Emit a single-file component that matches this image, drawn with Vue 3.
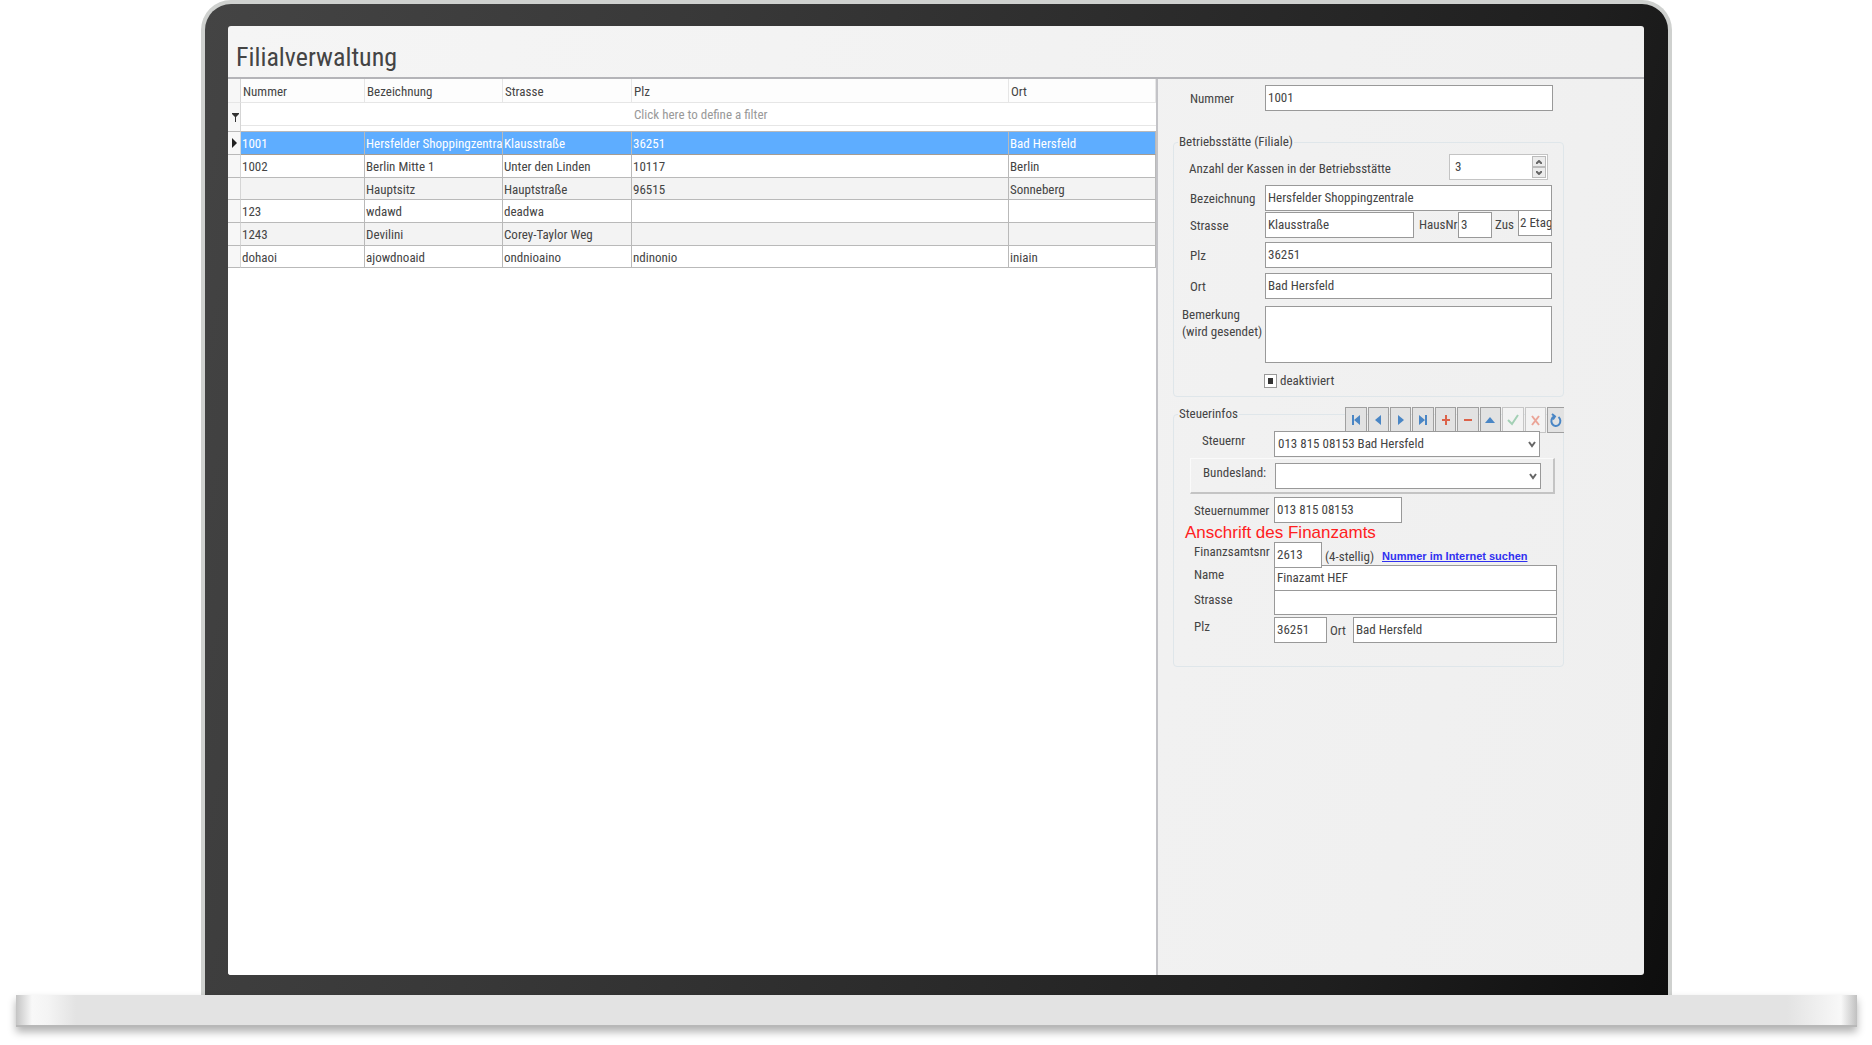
<script setup>
import { ref } from 'vue'

const rows = ref([
  ['1001', 'Hersfelder Shoppingzentra', 'Klausstraße', '36251', 'Bad Hersfeld'],
  ['1002', 'Berlin Mitte 1', 'Unter den Linden', '10117', 'Berlin'],
  ['', 'Hauptsitz', 'Hauptstraße', '96515', 'Sonneberg'],
  ['123', 'wdawd', 'deadwa', '', ''],
  ['1243', 'Devilini', 'Corey-Taylor Weg', '', ''],
  ['dohaoi', 'ajowdnoaid', 'ondnioaino', 'ndinonio', 'iniain'],
])
const selected = ref(0)

const tools = [
  { name: 'Erster', color: '#4a86c5', fill: 'M6 5h2v10H6zM14 5v10L8 10z' },
  { name: 'Zurück', color: '#4a86c5', fill: 'M13 5v10L7 10z' },
  { name: 'Weiter', color: '#4a86c5', fill: 'M7 5v10l6-5z' },
  { name: 'Letzter', color: '#4a86c5', fill: 'M6 5v10l6-5zM12 5h2v10h-2z' },
  { name: 'Hinzufügen', color: '#dc6249', fill: 'M9 5h2v4h3v2h-3v4H9v-4H6V9h3z' },
  { name: 'Löschen', color: '#dc6249', fill: 'M6 9h8v2H6z' },
  { name: 'Bearbeiten', color: '#4a86c5', fill: 'M5 13h10l-5-6z' },
  { name: 'Speichern', color: '#a3d0b5', stroke: 'M5 10l4 4 6-9', off: true },
  { name: 'Abbrechen', color: '#eba598', stroke: 'M7 6l7 9M14 6l-7 9', off: true },
  { name: 'Aktualisieren', color: '#4a86c5', stroke: 'M12.500 7A4.500 5 0 1 1 8 6.500M6 4l3 2.500-2 3' },
]
</script>

<template>
  <div class="laptop">
    <div class="lid">
      <main class="screen">
        <header class="title-bar"><h1>Filialverwaltung</h1></header>
        <div class="body">
          <section class="list">
            <table>
              <colgroup>
                <col class="c-mark" /><col class="c-num" /><col class="c-name" /><col class="c-street" /><col /><col class="c-city" />
              </colgroup>
              <thead>
                <tr class="heads">
                  <th class="mark"></th>
                  <th>Nummer</th><th>Bezeichnung</th><th>Strasse</th><th>Plz</th><th>Ort</th>
                </tr>
                <tr class="filter">
                  <td class="mark">
                    <svg width="7" height="9" viewBox="0 0 7 9"><path d="M0 0h7v1L4 4v5H3V4L0 1z" fill="#333" /></svg>
                  </td>
                  <td colspan="3"></td>
                  <td colspan="2">Click here to define a filter</td>
                </tr>
                <tr class="spacer"><td class="mark"></td><td colspan="5"></td></tr>
              </thead>
              <tbody>
                <tr v-for="(row, i) in rows" :key="i" :class="{ selected: i === selected }" @click="selected = i">
                  <td class="mark">
                    <svg v-if="i === selected" width="5" height="10" viewBox="0 0 5 10"><path d="M0 0l5 5-5 5z" fill="#222" /></svg>
                  </td>
                  <td v-for="(cell, j) in row" :key="j">{{ cell }}</td>
                </tr>
              </tbody>
            </table>
          </section>

          <form class="detail" @submit.prevent>
            <div class="row first">
              <label for="nummer">Nummer</label>
              <input id="nummer" class="grow" type="text" value="1001" />
            </div>

            <fieldset class="branch">
              <legend>Betriebsstätte (Filiale)</legend>
              <div class="row counter">
                <label for="kassen">Anzahl der Kassen in der Betriebsstätte</label>
                <div class="spin">
                  <input id="kassen" type="number" value="3" />
                  <div class="spin-buttons">
                    <button type="button" aria-label="Mehr"><svg width="6" height="4" viewBox="0 0 6 4"><path d="M0 4l3-3 3 3" /></svg></button>
                    <button type="button" aria-label="Weniger"><svg width="6" height="4" viewBox="0 0 6 4"><path d="M0 0l3 3 3-3" /></svg></button>
                  </div>
                </div>
              </div>
              <div class="row name">
                <label for="bez">Bezeichnung</label>
                <input id="bez" class="grow" type="text" value="Hersfelder Shoppingzentrale" />
              </div>
              <div class="row street">
                <label for="str">Strasse</label>
                <input id="str" class="grow" type="text" value="Klausstraße" />
                <label for="haus" class="inline house">HausNr</label>
                <input id="haus" class="tiny" type="text" value="3" />
                <label for="zus" class="inline extra">Zus</label>
                <input id="zus" class="tiny raised" type="text" value="2 Etag" />
              </div>
              <div class="row zip">
                <label for="plz">Plz</label>
                <input id="plz" class="grow" type="text" value="36251" />
              </div>
              <div class="row">
                <label for="ort">Ort</label>
                <input id="ort" class="grow" type="text" value="Bad Hersfeld" />
              </div>
              <div class="row note">
                <label for="bem">Bemerkung<br />(wird gesendet)</label>
                <textarea id="bem" class="grow"></textarea>
              </div>
              <div class="check">
                <input id="deakt" type="checkbox" :indeterminate="true" />
                <label for="deakt">deaktiviert</label>
              </div>
            </fieldset>

            <fieldset class="tax">
              <legend>Steuerinfos</legend>
              <div class="toolbar">
                <button v-for="t in tools" :key="t.name" type="button" :aria-label="t.name" :disabled="t.off">
                  <svg width="20" height="20" viewBox="0 0 20 20">
                    <path v-if="t.fill" :d="t.fill" :fill="t.color" />
                    <path v-else :d="t.stroke" fill="none" :stroke="t.color" stroke-width="2" />
                  </svg>
                </button>
              </div>
              <div class="row taxno">
                <label for="stnr">Steuernr</label>
                <div class="select">
                  <select id="stnr"><option>013 815 08153 Bad Hersfeld</option></select>
                  <svg width="8" height="8" viewBox="0 0 8 8"><path d="M1 2l3 4 3-4" /></svg>
                </div>
              </div>
              <div class="row state">
                <label for="land">Bundesland:</label>
                <div class="select">
                  <select id="land"><option></option></select>
                  <svg width="8" height="8" viewBox="0 0 8 8"><path d="M1 2l3 4 3-4" /></svg>
                </div>
              </div>
              <div class="row number">
                <label for="steuernummer">Steuernummer</label>
                <input id="steuernummer" class="wide" type="text" value="013 815 08153" />
              </div>
              <h2>Anschrift des Finanzamts</h2>
              <div class="row office">
                <label for="fanr">Finanzsamtsnr</label>
                <input id="fanr" class="short" type="text" value="2613" />
                <span class="hint">(4-stellig)</span>
                <a href="#">Nummer im Internet suchen</a>
              </div>
              <div class="row joined">
                <label for="faname">Name</label>
                <input id="faname" class="grow" type="text" value="Finazamt HEF" />
              </div>
              <div class="row joined low">
                <label for="fastr">Strasse</label>
                <input id="fastr" class="grow" type="text" value="" />
              </div>
              <div class="row place">
                <label for="faplz">Plz</label>
                <input id="faplz" class="short" type="text" value="36251" />
                <label for="faort" class="inline">Ort</label>
                <input id="faort" class="grow" type="text" value="Bad Hersfeld" />
              </div>
            </fieldset>
          </form>
        </div>
      </main>
    </div>
    <div class="base"></div>
  </div>
</template>

<style>
body {
  margin: 0;
  background: #fff;
}
</style>

<style scoped>
* {
  box-sizing: border-box;
}
.laptop {
  min-height: 100vh;
  overflow: hidden;
  font: 13px/16px 'Roboto Condensed', Roboto, 'Open Sans', sans-serif;
  color: #444;
}
.lid {
  margin: 0 200px 0 201px;
  padding: 22px 24px 20px 23px;
  border: 4px solid #cfd1cf;
  border-bottom: 0;
  border-radius: 30px 30px 0 0;
  background: linear-gradient(105deg, #444 0%, #383838 30%, #1f1f1f 80%, #0e0e0e 100%);
}
.screen {
  display: flex;
  flex-direction: column;
  min-height: calc(100vh - 96px);
  border-radius: 3px;
  background: linear-gradient(105deg, #f5f5f5, #efefef);
  overflow: hidden;
}
.title-bar {
  height: 53px;
  padding: 15px 8px 0;
  border-bottom: 2px solid #b4b4b8;
}
h1 {
  margin: 0;
  font-size: 26px;
  line-height: 32px;
  font-weight: 400;
}
.body {
  display: flex;
  flex: 1;
}

/* list of branches */
.list {
  flex: 1;
  min-width: 0;
  background: #fff;
  border-right: 2px solid #c3c3c7;
}
table {
  width: 100%;
  table-layout: fixed;
  border-collapse: separate;
  border-spacing: 0;
}
.c-mark { width: 13px; }
.c-num { width: 124px; }
.c-name { width: 138px; }
.c-street { width: 129px; }
.c-city { width: 147px; }
th,
td {
  padding: 0 0 0 2px;
  font-weight: 400;
  text-align: left;
  white-space: nowrap;
  overflow: hidden;
}
.heads th {
  height: 24px;
  padding: 2px 0 0 2px;
  border-right: 1px solid #e6e6e6;
  border-bottom: 1px solid #e6e6e6;
  background: #fdfdfd;
}
.filter td {
  height: 23px;
  padding: 1px 2px 0;
  color: #999;
  border-bottom: 1px solid #e6e6e6;
}
.spacer td {
  height: 6px;
  border-bottom: 1px solid #b9b9b9;
}
tbody td {
  height: 23px;
  padding: 2px 0 0 1px;
  background: #fff;
  border-right: 1px solid #b9b9b9;
  border-bottom: 1px solid #b9b9b9;
}
tbody tr:nth-child(3n) td { height: 22px; }
tbody tr:nth-child(odd) td { background: #f3f3f3; }
tbody tr.selected td:not(.mark) {
  background: #5eadff;
  color: #fff;
  border-bottom-color: #a59c92;
}
tbody tr td.mark,
thead td.mark,
.heads .mark {
  padding: 0 0 0 4px;
  background: #f7f7f7;
  border-right: 1px solid #d5d5d5;
}
.filter td.mark {
  padding-top: 5px;
  border-bottom: 0;
}
.mark svg { display: block; }

/* detail form */
.detail {
  width: 486px;
  padding: 6px 80px 0 15px;
}
.row {
  display: flex;
  align-items: center;
  margin: 5px 11px 0 0;
}
.row label:not(.inline) {
  flex: none;
  width: 75px;
  padding-top: 2px;
}
input,
select,
textarea,
button {
  margin: 0;
  font: inherit;
  color: inherit;
}
input,
select,
textarea {
  height: 26px;
  min-width: 0;
  padding: 0 2px 1px;
  border: 1px solid #999;
  border-radius: 0;
  background: #fff;
  outline: 0;
}
.grow {
  flex: 1;
}
.row.first {
  margin: 0 11px 0 17px;
}
fieldset {
  min-width: 0;
  margin: 0;
  padding: 0;
  border: 1px solid #dfe6ea;
  border-radius: 4px;
}
legend {
  margin-left: 4px;
  padding: 0 1px;
  line-height: 16px;
}
.branch {
  height: 263px;
  margin-top: 23px;
}
.branch .row {
  margin-left: 16px;
}
.branch .counter {
  justify-content: space-between;
  margin: 4px 15px 0 15px;
}
.branch .counter label {
  width: auto;
  padding-top: 4px;
}
.spin {
  display: flex;
  width: 99px;
  height: 26px;
  padding: 1px;
  border: 1px solid #c4c4c4;
  background: #fff;
}
.spin input {
  flex: 1;
  height: 22px;
  padding-left: 4px;
  border: 0;
  appearance: textfield;
}
.spin input::-webkit-inner-spin-button {
  appearance: none;
}
.spin-buttons {
  display: flex;
  flex-direction: column;
  width: 14px;
}
.spin-buttons button {
  display: flex;
  flex: 1;
  align-items: center;
  justify-content: center;
  padding: 0;
  border: 1px solid #bbb;
  background: #ececec;
}
.spin-buttons path,
.select path {
  fill: none;
  stroke: #666;
  stroke-width: 2;
}
.name,
.street {
  height: 26px;
}
.branch .street {
  margin-top: 1px;
}
.branch .zip {
  margin-top: 4px;
}
.tiny {
  width: 34px;
}
.house {
  width: 44px;
  padding-left: 5px;
  white-space: nowrap;
}
.extra {
  width: 26px;
  padding-left: 3px;
}
.raised {
  margin-top: -4px;
  padding: 0 0 1px 1px;
}
.branch .note {
  align-items: flex-start;
  margin-left: 8px;
  margin-top: 7px;
}
.branch .note label {
  width: 83px;
  padding-top: 0;
  line-height: 17px;
  white-space: nowrap;
}
textarea {
  height: 57px;
  resize: none;
}
.check {
  display: flex;
  align-items: center;
  gap: 3px;
  margin: 10px 0 0 90px;
}
.check input {
  width: 13px;
  height: 14px;
  padding: 3px;
  appearance: none;
}
.check input:indeterminate {
  background: #333;
  box-shadow: inset 0 0 0 3px #fff;
}

.tax {
  height: 261px;
  margin-top: 9px;
}
.tax .row {
  margin: 0 6px 0 20px;
}
.tax .row label:not(.inline) {
  width: 80px;
  padding: 0 0 6px;
  white-space: nowrap;
}
.toolbar {
  display: flex;
  justify-content: flex-end;
  gap: 1px;
  width: 219px;
  height: 26px;
  margin: -15px -1px 0 auto;
}
.toolbar button {
  display: flex;
  flex: 1;
  align-items: center;
  justify-content: center;
  min-width: 0;
  padding: 0;
  border: 1px solid #a0a0a0;
  background: #e2e2e2;
}
.toolbar button:disabled {
  border-color: #c6c6c6;
  background: #f3f3f3;
}
.toolbar button:last-child {
  flex: 0 0 17px;
  border-right: 0;
  overflow: hidden;
}
.toolbar svg {
  flex: none;
}
.select {
  position: relative;
  width: 266px;
}
.select select {
  display: block;
  width: 100%;
  padding-left: 3px;
  appearance: none;
}
.select svg {
  position: absolute;
  top: 9px;
  right: 4px;
  pointer-events: none;
}
.tax .taxno {
  margin-top: -2px;
  padding-left: 8px;
}
.tax .taxno label:not(.inline),
.tax .state label:not(.inline) {
  width: 72px;
}
.tax .state {
  margin: 1px 8px 0 16px;
  height: 36px;
  padding-left: 12px;
  border: solid;
  border-width: 1px 2px 2px 1px;
  border-color: #fafafa #c4c4c4 #c4c4c4 #fafafa;
}
.tax .number {
  margin-top: 3px;
}
.tax .number label:not(.inline) {
  padding: 2px 0 0;
}
.wide {
  width: 128px;
}
h2 {
  margin: 0 0 0 11px;
  font: 400 17px/19px 'Liberation Sans', Arial, sans-serif;
  color: #ff2020;
}
.short {
  width: 48px;
}
.hint {
  width: 60px;
  padding: 4px 0 0 3px;
  white-space: nowrap;
}
a {
  padding-top: 2px;
  font: 700 11px/16px 'Liberation Sans', Arial, sans-serif;
  color: #3030f0;
  white-space: nowrap;
}
.office {
  position: relative;
}
.tax .joined {
  margin-top: -3px;
}
.low input {
  height: 25px;
}
.tax .low {
  margin-top: -1px;
}
.tax .place {
  margin-top: 2px;
}
.place .short {
  width: 53px;
}
.place .inline {
  width: 26px;
  padding: 2px 0 0 3px;
}

/* keyboard half, seen from the front */
.base {
  height: 32px;
  margin: 0 15px 0 16px;
  border-bottom: 2px solid #b8b8b8;
  background: linear-gradient(90deg, #c4c4c4, #f8f8f8 16px, #f4f4f4 32px, #e3e3e3 60px, #e3e3e3 calc(100% - 70px), #f8f8f8 calc(100% - 16px), #c0c0c0);
  box-shadow: 0 5px 8px rgba(0, 0, 0, 0.3);
}
</style>
